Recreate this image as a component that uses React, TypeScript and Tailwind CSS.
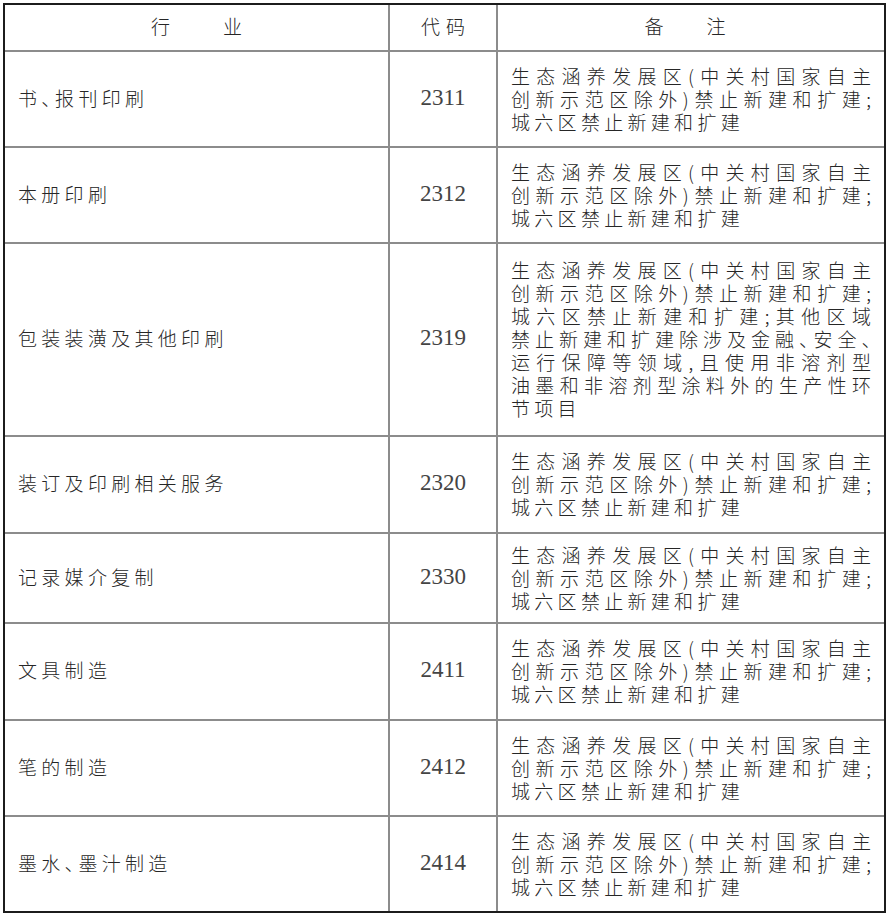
const std = ['生态涵养发展区(中关村国家自主', '创新示范区除外)禁止新建和扩建;']
const stdLast = '城六区禁止新建和扩建'

type Row = { name: string; code: string; lines: string[]; last: string; h: string; border: boolean }

const rows: Row[] = [
  { name: '书、报刊印刷', code: '2311', lines: std, last: stdLast, h: 'h-[96px]', border: true },
  { name: '本册印刷', code: '2312', lines: std, last: stdLast, h: 'h-[96px]', border: true },
  {
    name: '包装装潢及其他印刷',
    code: '2319',
    lines: [
      '生态涵养发展区(中关村国家自主',
      '创新示范区除外)禁止新建和扩建;',
      '城六区禁止新建和扩建;其他区域',
      '禁止新建和扩建除涉及金融、安全、',
      '运行保障等领域,且使用非溶剂型',
      '油墨和非溶剂型涂料外的生产性环',
    ],
    last: '节项目',
    h: 'h-[193px]',
    border: true,
  },
  { name: '装订及印刷相关服务', code: '2320', lines: std, last: stdLast, h: 'h-[97px]', border: true },
  { name: '记录媒介复制', code: '2330', lines: std, last: stdLast, h: 'h-[90px]', border: true },
  { name: '文具制造', code: '2411', lines: std, last: stdLast, h: 'h-[97px]', border: true },
  { name: '笔的制造', code: '2412', lines: std, last: stdLast, h: 'h-[96px]', border: true },
  { name: '墨水、墨汁制造', code: '2414', lines: std, last: stdLast, h: 'h-[94px]', border: false },
]

export default function App() {
  return (
    <div className="min-h-[917px] w-[892px] bg-white pl-[3px] pt-[3px] font-['Noto_Sans_CJK_SC',sans-serif] text-[19px] font-light text-[#262626] [font-feature-settings:'halt']">
      <div className="w-[883px] border-2 border-[#1c1c1c]">
        {/* header */}
        <div className="grid h-[47px] grid-cols-[385px_108px_1fr] border-b-2 border-[#8c8c8c]">
          <div className="flex items-center justify-center gap-[53px] border-r-2 border-[#8c8c8c] pb-[2px]">
            <span>行</span>
            <span>业</span>
          </div>
          <div className="flex items-center justify-center gap-[6px] border-r-2 border-[#8c8c8c] pb-[2px]">
            <span>代</span>
            <span>码</span>
          </div>
          <div className="flex items-center justify-center gap-[43px] pr-3 pb-[2px]">
            <span>备</span>
            <span>注</span>
          </div>
        </div>

        {rows.map((r) => (
          <div
            key={r.code}
            className={`grid grid-cols-[385px_108px_1fr] ${r.h} ${r.border ? 'border-b-2 border-[#8c8c8c]' : ''}`}
          >
            <div className="flex items-center border-r-2 border-[#8c8c8c] pb-[2px] pl-[13px] tracking-[4.3px]">
              {r.name}
            </div>
            <div className="flex items-center justify-center border-r-2 border-[#8c8c8c] pb-[2px] font-['Liberation_Serif',serif] text-[23px] font-light text-[#444]">
              {r.code}
            </div>
            <div className="flex flex-col justify-center px-[13px] pb-[2px] leading-[23px]">
              {r.lines.map((l, i) => (
                <div key={i} className="whitespace-nowrap text-justify [text-align-last:justify]">
                  {l}
                </div>
              ))}
              <div className="whitespace-nowrap tracking-[4.3px]">{r.last}</div>
            </div>
          </div>
        ))}
      </div>
    </div>
  )
}
